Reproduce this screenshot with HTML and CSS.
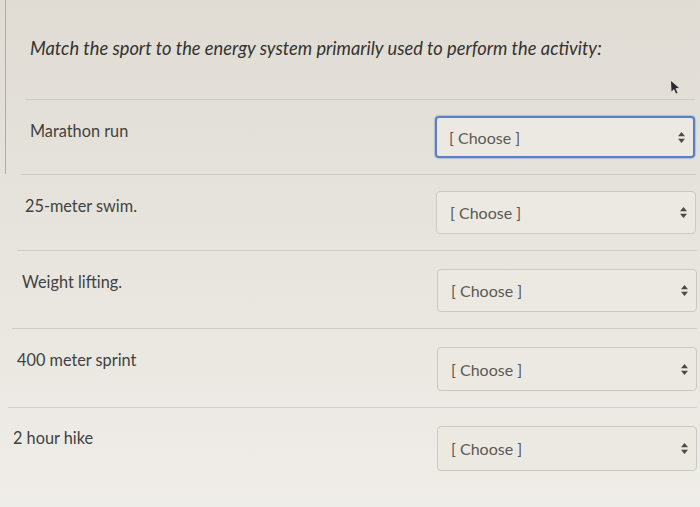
FILE: index.html
```html
<!DOCTYPE html>
<html>
<head>
<meta charset="utf-8">
<link rel="stylesheet" href="styles.css">
</head>
<body>
<div class="page">
  <div class="sheet">
    <div class="title">Match the sport to the energy system primarily used to perform the activity:</div>
    <div class="row r1">
      <div class="label">Marathon run</div>
      <div class="select focused"><span>[ Choose ]</span><svg class="arrows" width="7" height="11" viewBox="0 0 7 11"><path d="M3.5 0 L7 4.2 L0 4.2 Z M0 6.8 L7 6.8 L3.5 11 Z" fill="#4a4a4a"/></svg></div>
    </div>
  </div>
  <div class="row r2">
    <div class="label">25-meter swim.</div>
    <div class="select"><span>[ Choose ]</span><svg class="arrows" width="7" height="11" viewBox="0 0 7 11"><path d="M3.5 0 L7 4.2 L0 4.2 Z M0 6.8 L7 6.8 L3.5 11 Z" fill="#4a4a4a"/></svg></div>
  </div>
  <div class="row r3">
    <div class="label">Weight lifting.</div>
    <div class="select"><span>[ Choose ]</span><svg class="arrows" width="7" height="11" viewBox="0 0 7 11"><path d="M3.5 0 L7 4.2 L0 4.2 Z M0 6.8 L7 6.8 L3.5 11 Z" fill="#4a4a4a"/></svg></div>
  </div>
  <div class="row r4">
    <div class="label">400 meter sprint</div>
    <div class="select"><span>[ Choose ]</span><svg class="arrows" width="7" height="11" viewBox="0 0 7 11"><path d="M3.5 0 L7 4.2 L0 4.2 Z M0 6.8 L7 6.8 L3.5 11 Z" fill="#4a4a4a"/></svg></div>
  </div>
  <div class="row r5">
    <div class="label">2 hour hike</div>
    <div class="select"><span>[ Choose ]</span><svg class="arrows" width="7" height="11" viewBox="0 0 7 11"><path d="M3.5 0 L7 4.2 L0 4.2 Z M0 6.8 L7 6.8 L3.5 11 Z" fill="#4a4a4a"/></svg></div>
  </div>
  <svg class="cursor" width="12" height="16" viewBox="0 0 12 16"><path d="M2 1 L10 8 L6.5 8.3 L8.5 13 L7 13.6 L5 9 L2.5 11.5 Z" fill="#2a2a2a"/></svg>
</div>
</body>
</html>
```
FILE: styles.css
```css
html, body {
  margin: 0;
  padding: 0;
}
body {
  width: 700px;
  height: 507px;
  overflow: hidden;
  background: linear-gradient(180deg, #e0dcd4 0%, #e6e3dc 40%, #efede8 100%);
  font-family: Lato, "Open Sans", sans-serif;
  color: #434240;
}
.page {
  position: relative;
  height: 507px;
}
.sheet {
  margin-left: 5px;
  border-left: 1px solid #b0aca5;
}
.title {
  height: 99px;
  box-sizing: border-box;
  padding: 36px 0 0 24px;
  font-style: italic;
  font-size: 18.3px;
  line-height: 24px;
  color: #343331;
  white-space: nowrap;
}
.row {
  display: flex;
  align-items: flex-start;
  border-top: 1px solid #cfccc5;
  padding-left: 5px;
}
.label {
  font-size: 16.3px;
  line-height: 20px;
}
.select {
  margin-left: auto;
  box-sizing: border-box;
  width: 260px;
  display: flex;
  align-items: center;
  padding: 0 8px 0 13px;
  border: 1px solid #ccc8c1;
  border-radius: 4px;
  background: #ece9e3;
  font-size: 16px;
  color: #5a5955;
}
.select span {
  flex: 1;
}
.select.focused {
  border: 2px solid #5a80c2;
  box-shadow: 0 0 1px 1px rgba(90, 128, 194, 0.35);
  padding-left: 12px;
}
.r1 {
  margin-left: 19px;
  padding: 16px 0 16px 5px;
  margin-right: 5px;
}
.r1 .label { margin-top: 5px; }
.r1 .select { height: 42px; }
.r2 {
  margin-left: 21px;
  padding: 16px 0 16px 4px;
  margin-right: 4px;
}
.r2 .label { margin-top: 5px; }
.r2 .select { height: 43px; }
.r3 {
  margin-left: 17px;
  padding: 18px 0 16px 5px;
  margin-right: 3px;
}
.r3 .label { margin-top: 3px; }
.r3 .select { height: 43px; }
.r4 {
  margin-left: 12px;
  padding: 18px 0 16px 5px;
  margin-right: 3px;
}
.r4 .label { margin-top: 3px; }
.r4 .select { height: 44px; }
.r5 {
  margin-left: 8px;
  padding: 18px 0 16px 5px;
  margin-right: 3px;
  border-top-color: #d3d0ca;
}
.r5 .label { margin-top: 2px; }
.r5 .select { height: 45px; }
.cursor {
  position: absolute;
  left: 669px;
  top: 80px;
}
```
